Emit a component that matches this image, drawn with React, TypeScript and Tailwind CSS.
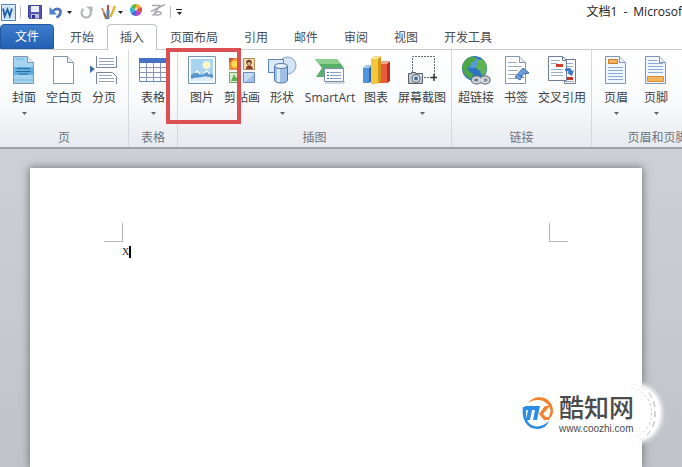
import { useState } from 'react'
import type { ReactNode } from 'react'

const font = "font-['Open_Sans','Noto_Sans_CJK_SC',sans-serif]"

function Caret() {
  return (
    <svg width="5" height="3" viewBox="0 0 5 3" fill="currentColor" aria-hidden="true">
      <path d="M0 0h5L2.5 3z" />
    </svg>
  )
}

function WordLogo() {
  return (
    <svg width="17" height="17" viewBox="0 0 17 17" aria-hidden="true">
      <path d="M1.500.500h14v16h-14z" fill="#e4f1fb" stroke="#4b82bd" />
      <path d="M3 2h8v13H3z" fill="#c5e0f5" />
      <path d="m3 4.500 1.700 7.500L7.500 5.500l2.300 6.500L12 4.500" fill="none" stroke="#1f5fa9" strokeWidth="1.800" />
      <path d="M13 4h2M13 7h2M13 10h2M13 13h2" stroke="#a9c6e2" />
    </svg>
  )
}

function SaveIcon() {
  return (
    <svg width="14" height="14" viewBox="0 0 14 14" aria-hidden="true">
      <path d="M.5.5h13v13h-12l-1-1z" fill="#5757b8" stroke="#3c3c92" />
      <path d="M3 1h8v6H3z" fill="#eef0fb" />
      <path d="M3 9h8v4.500H3z" fill="#b9bde0" />
      <path d="M4 10h3v3.500H4z" fill="#30307c" />
    </svg>
  )
}

function UndoIcon() {
  return (
    <svg width="14" height="13" viewBox="0 0 14 13" aria-hidden="true">
      <path d="M4 5C7 1.500 12 2.500 11.500 6.500 11.200 9 9.500 10.500 7.500 11.500" fill="none" stroke="#4a77bd" strokeWidth="2.600" />
      <path d="M.5 1v7.500H8z" fill="#4d7fcb" />
    </svg>
  )
}

function RedoIcon() {
  return (
    <svg width="13" height="13" viewBox="0 0 13 13" aria-hidden="true">
      <path d="M3.500 3A4.700 4.700 0 1 0 10 4" fill="none" stroke="#b4b6ba" strokeWidth="2.200" />
      <path d="M6 .5h6.500V6z" fill="#b4b6ba" />
    </svg>
  )
}

function PensIcon() {
  return (
    <svg width="15" height="16" viewBox="0 0 15 16" fill="none" aria-hidden="true">
      <path d="m1 4 4 10" stroke="#e08a5a" strokeWidth="2" />
      <path d="M7 1v6" stroke="#c44d3d" strokeWidth="2" />
      <path d="M7 6v9" stroke="#5a7fb5" strokeWidth="3" />
      <path d="M14 2 9.500 13" stroke="#e2b43c" strokeWidth="2.500" />
      <path d="m3 9 2.500 6" stroke="#8c6a5c" strokeWidth="2" />
    </svg>
  )
}

function ColorsIcon() {
  return (
    <svg width="12" height="12" viewBox="0 0 12 12" aria-hidden="true">
      <path d="M6 6V0a6 6 0 0 1 5.200 3z" fill="#f3a83a" />
      <path d="M6 6 11.200 3a6 6 0 0 1 0 6z" fill="#e14a4a" />
      <path d="m6 6 5.200 3A6 6 0 0 1 6 12z" fill="#b44bc9" />
      <path d="M6 6v6A6 6 0 0 1 .8 9z" fill="#3f6fe0" />
      <path d="M6 6 .8 9a6 6 0 0 1 0-6z" fill="#35b5c9" />
      <path d="M6 6 .8 3A6 6 0 0 1 6 0z" fill="#58bb3d" />
      <circle cx="6" cy="5" r="1.500" fill="#fff" opacity=".6" />
    </svg>
  )
}

function StrikeIcon() {
  return (
    <svg width="15" height="12" viewBox="0 0 15 12" fill="none" stroke="#a9abaf" aria-hidden="true">
      <path d="M2 1.500h8L4 10c3-3 8-3 7 0-2 2-6 0-9 1" strokeWidth="1.500" />
      <path d="M1 7.500 15 .5" strokeWidth="1.500" />
    </svg>
  )
}

function Sheet({ fill = '#fff', children }: { fill?: string; children?: ReactNode }) {
  return (
    <svg width="30" height="30" viewBox="0 0 30 30" aria-hidden="true">
      <path d="M4.500 1.500h14l6 6v21h-20z" fill={fill} stroke="#8494ad" />
      <path d="M18.500 1.500v6h6" fill="#e9eef6" stroke="#8494ad" />
      {children}
    </svg>
  )
}

const CoverIcon = () => (
  <Sheet fill="#a5d4f0">
    <path d="M5 12h19v8H5z" fill="#62aede" />
    <path d="M8 13.500h13M7 16.500h15M10 19h9" stroke="#2c6f9f" />
    <path d="M7 4h8M5 25h19" stroke="#8cc7e9" strokeWidth="2" />
  </Sheet>
)

const BreakIcon = () => (
  <svg width="30" height="30" viewBox="0 0 30 30" fill="none" aria-hidden="true">
    <path d="M7.500 1v11.500h20V1" fill="#fff" stroke="#75849b" />
    <path d="M10 3.500h15M10 6.500h15M10 9.500h15" stroke="#96a3b8" />
    <path d="M7.500 29V17.500h16l4 4V29" fill="#fff" stroke="#75849b" />
    <path d="M10 20.500h13M10 23.500h15M10 26.500h15" stroke="#96a3b8" />
    <path d="M1 10.500 6 14l-5 4z" fill="#3c6fa9" />
  </svg>
)

const TableIcon = () => (
  <svg width="30" height="30" viewBox="0 0 30 30" aria-hidden="true">
    <path d="M1.500 3.500h27v23h-27z" fill="#fff" stroke="#6c87b5" />
    <path d="M1 3h28v5H1z" fill="#4672c4" />
    <path d="M2 12.500h26M2 17.500h26M2 22.500h26M8.500 8v18M15.500 8v18M22.500 8v18" stroke="#8798b4" />
  </svg>
)

const PictureIcon = () => (
  <svg width="30" height="30" viewBox="0 0 30 30" aria-hidden="true">
    <path d="M1.500 1.500h27v27h-27z" fill="#f5fafd" stroke="#7397b5" />
    <path d="M4 4h22v22H4z" fill="#a9d4ef" />
    <path d="M4 20c3-1 4-4 6-4s3 4 5 4 3-4 5-4 4 3 6 4v6H4z" fill="#5796cc" />
    <path d="M4 24c4-2 7-1 11-2s7 0 11 1v3H4z" fill="#dcedf8" />
    <path d="m8 18 2-2 3 3M17 18l3-2 3 3" fill="none" stroke="#fff" strokeWidth="1.500" />
    <circle cx="19.500" cy="10" r="4" fill="#eef7dc" />
    <circle cx="19.500" cy="10" r="2.500" fill="#fff7b5" />
  </svg>
)

const ClipArtIcon = () => (
  <svg width="30" height="30" viewBox="0 0 30 30" aria-hidden="true">
    <path d="M2 3h12v12H2z" fill="#ec913b" />
    <circle cx="8" cy="9" r="3.500" fill="#fbd84e" />
    <path d="M2 3h5l-5 5z" fill="#c94f35" />
    <path d="M16.500 3.500h11v11h-11z" fill="#f5dfb0" stroke="#b18a55" />
    <path d="M19 14c0-5 6-5 7 0z" fill="#8b3f2c" />
    <circle cx="22" cy="7.500" r="2.800" fill="#6c4127" />
    <circle cx="22" cy="8.500" r="1.600" fill="#e9b789" />
    <path d="M2.500 17.500h11v10h-11z" fill="#d8edcb" stroke="#76a56b" />
    <path d="m4 26 3-7 2 4 2-2 1 5z" fill="#64ad56" />
    <path d="M16.500 17.500h11v10h-11z" fill="#c7dbf5" stroke="#6c87b5" />
    <path d="m18 27 9-8v8z" fill="#a3c0ea" />
  </svg>
)

const ShapesIcon = () => (
  <svg width="30" height="30" viewBox="0 0 30 30" aria-hidden="true">
    <circle cx="20.500" cy="10.500" r="8.500" fill="#d3e4f5" stroke="#7d9cc2" />
    <path d="M1.500 4.500h15v13h-15z" fill="#dce9f7" stroke="#5f83b3" />
    <path d="M7.500 11v14c0 4 13 4 13 0V11z" fill="#9fc1e8" stroke="#5177aa" />
    <path d="M10 14v13h3V14z" fill="#dceafa" />
    <ellipse cx="14" cy="11" rx="6.500" ry="2.500" fill="#e6f0fb" stroke="#5177aa" />
  </svg>
)

const SmartArtIcon = () => (
  <svg width="30" height="30" viewBox="0 0 30 30" aria-hidden="true">
    <path d="M0 4h22l7 9-7 9H1l6-9z" fill="#55b168" />
    <path d="M1 4h21l4 5H4z" fill="#8dd08d" />
    <path d="M9.500 13.500h19v13h-19z" fill="#f7faff" stroke="#7b8eae" />
    <path d="M12 17.500h2M12 20.500h2M12 23.500h2" stroke="#426faf" />
    <path d="M15 17.500h11M15 20.500h11M15 23.500h11" stroke="#8a9dbb" />
    <path d="M10 28h19v-2" fill="none" stroke="#aab5c7" />
  </svg>
)

const ChartIcon = () => (
  <svg width="30" height="30" viewBox="0 0 30 30" aria-hidden="true">
    <path d="m2 13 3-2.500h6V26l-3 2H2z" fill="#2d64a8" />
    <path d="M2 13h6v15H2z" fill="#4f95dc" />
    <path d="m2 13 3-2.500h6L8 13z" fill="#a6cdf2" />
    <path d="m18 9 3-2.500h8V26l-3 2h-8z" fill="#b92e20" />
    <path d="M18 9h8v19h-8z" fill="#ea5b3d" />
    <path d="m18 9 3-2.500h8L26 9z" fill="#f6a58a" />
    <path d="m10 4 3-2.500h7V26l-3 2.500h-7z" fill="#cf9715" />
    <path d="M10 4h7v24.500h-7z" fill="#f6c73c" />
    <path d="m10 4 3-2.500h7L17 4z" fill="#fde999" />
  </svg>
)

const ScreenshotIcon = () => (
  <svg width="30" height="30" viewBox="0 0 30 30" aria-hidden="true">
    <path d="M5.500 17V1.500h22V22M17 22.500h7" fill="none" stroke="#626870" strokeDasharray="2 1" />
    <path d="M27 19v7M23.500 22.500h7" stroke="#333" strokeWidth="1.500" />
    <path d="M1.500 18.500h3v-1h4v1h7v10h-14z" fill="#c3c8cf" stroke="#59616d" />
    <circle cx="9" cy="23.500" r="4" fill="#e4e9ef" stroke="#59616d" />
    <circle cx="9" cy="23.500" r="2" fill="#446b94" />
    <path d="M13 20.500h2" stroke="#fff" />
  </svg>
)

const LinkIcon = () => (
  <svg width="30" height="30" viewBox="0 0 30 30" aria-hidden="true">
    <circle cx="13.500" cy="13.500" r="12.500" fill="#2e74c4" />
    <ellipse cx="12" cy="8" rx="8" ry="5" fill="#78b2e8" opacity=".6" />
    <path d="M3 7c3-5 8-6 12-5l-1 4-4 2-1 4-3 1 3 4 3 2-2 5C4 22 1 16 1 12z" fill="#4ca546" />
    <path d="m17 5 5-1 4 7-1 7-4 3-2-5-4-3 1-4z" fill="#5db451" />
    <g fill="none" stroke="#6e7782" strokeWidth="4.500">
      <ellipse cx="15.500" cy="25" rx="3.500" ry="2.500" />
      <ellipse cx="24" cy="25" rx="3.500" ry="2.500" />
    </g>
    <g fill="none" stroke="#d2d7dc" strokeWidth="2">
      <ellipse cx="15.500" cy="25" rx="3.500" ry="2.500" />
      <ellipse cx="24" cy="25" rx="3.500" ry="2.500" />
      <path d="M17 25h6" />
    </g>
  </svg>
)

const BookmarkIcon = () => (
  <Sheet>
    <path d="M7 7.500h9M7 11.500h14M7 15.500h10M7 19.500h9M7 23.500h12" stroke="#9aabc4" />
    <path d="m14 22 8-9 6 5-6 1-3 6z" fill="#6f9ddb" stroke="#3f70b7" />
    <path d="m18 20 5 3" stroke="#2f5c9f" />
  </Sheet>
)

const CrossRefIcon = () => (
  <svg width="30" height="30" viewBox="0 0 30 30" aria-hidden="true">
    <path d="M17.500 4.500h11v24h-11z" fill="#fff" stroke="#6d7f9b" />
    <path d="M20 8.500h6M20 11.500h6M18 26.500h9" stroke="#9aabc4" />
    <path d="M19 22h7v3h-7z" fill="#c9302c" />
    <path d="M1.500 1.500h14l4 4v20h-18z" fill="#fff" stroke="#6d7f9b" />
    <path d="M15.500 1.500v4h4" fill="none" stroke="#6d7f9b" />
    <path d="M4 5.500h9M4 8.500h6M4 14.500h12M4 17.500h12M4 20.500h12" stroke="#9aabc4" />
    <path d="M9 9h7v3H9z" fill="#d33a2c" />
    <path d="M18 14c4-2 6-1 7 2l2-1-2 6-5-3 2-1c-1-1-2-1-4-1z" fill="#3f78c2" />
  </svg>
)

const HeaderIcon = () => (
  <Sheet fill="#eff6fd">
    <path d="M7.500 4.500h9v4h-9z" fill="#f7b45e" stroke="#c77c2b" />
    <path d="M7 12.500h15M7 15.500h15M7 18.500h15M7 21.500h15M7 24.500h15" stroke="#8caad2" />
  </Sheet>
)

const FooterIcon = () => (
  <Sheet fill="#eff6fd">
    <path d="M7 5.500h9M7 8.500h15M7 11.500h15M7 14.500h15M7 17.500h15" stroke="#8caad2" />
    <path d="M6.500 21.500h16v5h-16z" fill="#f7b45e" stroke="#d98a34" />
  </Sheet>
)

interface Tool {
  label: string
  icon: ReactNode
  width?: string
  menu?: boolean
  marked?: boolean
}

interface Group {
  label: string
  width: string
  tools: Tool[]
}

const groups: Group[] = [
  {
    label: '页',
    width: 'w-[129px]',
    tools: [
      { label: '封面', icon: <CoverIcon />, menu: true },
      { label: '空白页', icon: <Sheet /> },
      { label: '分页', icon: <BreakIcon /> },
    ],
  },
  {
    label: '表格',
    width: 'w-[49px]',
    tools: [{ label: '表格', icon: <TableIcon />, menu: true }],
  },
  {
    label: '插图',
    width: 'w-[274px]',
    tools: [
      { label: '图片', icon: <PictureIcon />, marked: true },
      { label: '剪贴画', icon: <ClipArtIcon /> },
      { label: '形状', icon: <ShapesIcon />, menu: true },
      { label: 'SmartArt', icon: <SmartArtIcon />, width: 'w-14' },
      { label: '图表', icon: <ChartIcon />, width: 'w-9' },
      { label: '屏幕截图', icon: <ScreenshotIcon />, width: 'w-14', menu: true },
    ],
  },
  {
    label: '链接',
    width: 'w-[140px]',
    tools: [
      { label: '超链接', icon: <LinkIcon /> },
      { label: '书签', icon: <BookmarkIcon /> },
      { label: '交叉引用', icon: <CrossRefIcon />, width: 'w-13' },
    ],
  },
  {
    label: '页眉和页脚',
    width: 'w-[132px]',
    tools: [
      { label: '页眉', icon: <HeaderIcon />, menu: true },
      { label: '页脚', icon: <FooterIcon />, menu: true },
    ],
  },
]

const tabs = ['开始', '插入', '页面布局', '引用', '邮件', '审阅', '视图', '开发工具']

function ToolButton({ tool }: { tool: Tool }) {
  return (
    <div className={`relative shrink-0 ${tool.width ?? 'w-10'}`}>
      <button type="button" className="flex w-full flex-col items-center text-xs leading-4 text-[#3b3f45]">
        {tool.icon}
        <span className="mt-[5px] whitespace-nowrap">{tool.label}</span>
        {tool.menu && (
          <span className="mt-[6px] text-[#666]">
            <Caret />
          </span>
        )}
      </button>
      {tool.marked && (
        <div className="pointer-events-none absolute -top-[7px] -left-4 z-10 h-[76px] w-[75px] border-4 border-[#dc5054]" />
      )}
    </div>
  )
}

function TitleBar() {
  return (
    <header className="flex h-6 items-center overflow-hidden text-[#222]">
      <WordLogo />
      <span className="ml-[3px] h-3 w-px bg-[#bbb]" />
      <button type="button" aria-label="保存" className="ml-[7px]"><SaveIcon /></button>
      <button type="button" aria-label="撤消" className="ml-[7px]"><UndoIcon /></button>
      <button type="button" aria-label="撤消选项" className="ml-1"><Caret /></button>
      <button type="button" aria-label="重复" className="ml-2"><RedoIcon /></button>
      <button type="button" aria-label="画笔" className="ml-2"><PensIcon /></button>
      <button type="button" aria-label="画笔选项" className="ml-[2px]"><Caret /></button>
      <button type="button" aria-label="颜色" className="ml-[7px] pb-1"><ColorsIcon /></button>
      <button type="button" aria-label="删除线" className="ml-2 pb-1"><StrikeIcon /></button>
      <span className="ml-[5px] h-3 w-px bg-[#bbb]" />
      <button type="button" aria-label="自定义快速访问工具栏" className="ml-1 flex w-2 flex-col items-center gap-[2px]">
        <span className="h-px w-[6px] bg-[#222]" />
        <Caret />
      </button>
      <h1 className="ml-auto flex shrink-0 gap-[6px] text-xs leading-5 whitespace-nowrap">
        <span>文档1</span>
        <span>-</span>
        <span>Microsof</span>
      </h1>
    </header>
  )
}

function Watermark() {
  return (
    <div className="absolute right-[22px] bottom-[25px] flex h-[58px] w-[154px] items-center gap-[5px] rounded-[28px] bg-white pl-4 shadow-[0_0_4px_2px_#ffffff]">
      <div className="absolute inset-y-0 right-1 w-14 rounded-r-[26px] border-r-2 border-dashed border-[#d2d3d5]" />
      <div className="absolute inset-y-1 right-2 w-14 rounded-r-[24px] border-r border-dashed border-[#c3c5c8]" />
      <svg width="32" height="34" viewBox="0 0 32 34" fill="none" className="relative" aria-hidden="true">
        <path d="M6 7C13-3 31 0 31 15c0 5-3 8-7 9 4-4 6-9 3-14C23 3 13 2 6 7z" fill="#f1812e" />
        <path d="M1 11C-1 23 5 33 15 33c6 0 10-3 12-8-6 6-14 7-19 3C4 24 3 18 5 11z" fill="#2d8de5" />
        <path d="M3 10h15l-3 14h-4l2-10h-3L8 24H4l2-10H2z" fill="#2d8de5" />
        <path d="M23 10h5l-7 8 3 3h4l-1 3h-5l-5-6z" fill="#f1812e" />
      </svg>
      <div className="relative text-[#4b4b4b]">
        <div className="text-[25px] leading-8 font-medium">酷知网</div>
        <div className="font-['Liberation_Sans',sans-serif] text-[10px] leading-3">www.coozhi.com</div>
      </div>
    </div>
  )
}

export default function App() {
  const [active, setActive] = useState('插入')

  return (
    <div className={`flex min-h-screen flex-col overflow-hidden bg-white ${font}`}>
      <TitleBar />

      <nav className="flex h-[26px] items-stretch border-b border-[#c9ccd1] text-xs text-[#4a4d52]">
        <button type="button" className="mr-[3px] w-[54px] shrink-0 rounded-t-sm border border-[#2458a3] bg-linear-to-b from-[#3f7ccb] to-[#2460b4] text-white">
          文件
        </button>
        {tabs.map((tab) => (
          <button
            key={tab}
            type="button"
            onClick={() => setActive(tab)}
            className={`-mb-px shrink-0 px-3 whitespace-nowrap border-x border-t ${
              tab === active ? 'rounded-t border-[#c0c4ca] bg-white' : 'border-transparent'
            }`}
          >
            {tab}
          </button>
        ))}
      </nav>

      <div className="flex h-[99px] border-b-2 border-[#9da1a8] bg-linear-to-b from-white via-[#fafbfc] to-[#e7eaef]">
        {groups.map((group) => (
          <section key={group.label} aria-label={group.label} className={`flex shrink-0 flex-col border-r border-[#d5d8dd] pt-[5px] ${group.width}`}>
            <div className={`flex flex-1 ${group.tools.length > 1 ? 'pl-1' : 'justify-center'}`}>
              {group.tools.map((tool) => (
                <ToolButton key={tool.label} tool={tool} />
              ))}
            </div>
            <div className="pb-px text-center text-xs leading-4 whitespace-nowrap text-[#6d7480]">{group.label}</div>
          </section>
        ))}
      </div>

      <main className="relative flex flex-1 flex-col bg-linear-to-b from-[#cdd1d6] to-[#c0c4c9] pt-[19px] pr-10 pl-[30px]">
        <div className="flex-1 bg-white px-[74px] pt-[55px] shadow-[0_0_8px_1px_#777b81]">
          <div className="flex justify-between">
            <span className="size-[19px] border-r border-b border-[#b5b5b5]" />
            <span className="size-[19px] border-b border-l border-[#b5b5b5]" />
          </div>
          <p className="flex items-center pt-[2px] pl-[18px] font-['Liberation_Serif',serif] text-[10px] leading-4 text-[#222]">
            X<span className="h-3 w-[2px] bg-black" />
          </p>
        </div>
        <Watermark />
      </main>
    </div>
  )
}
